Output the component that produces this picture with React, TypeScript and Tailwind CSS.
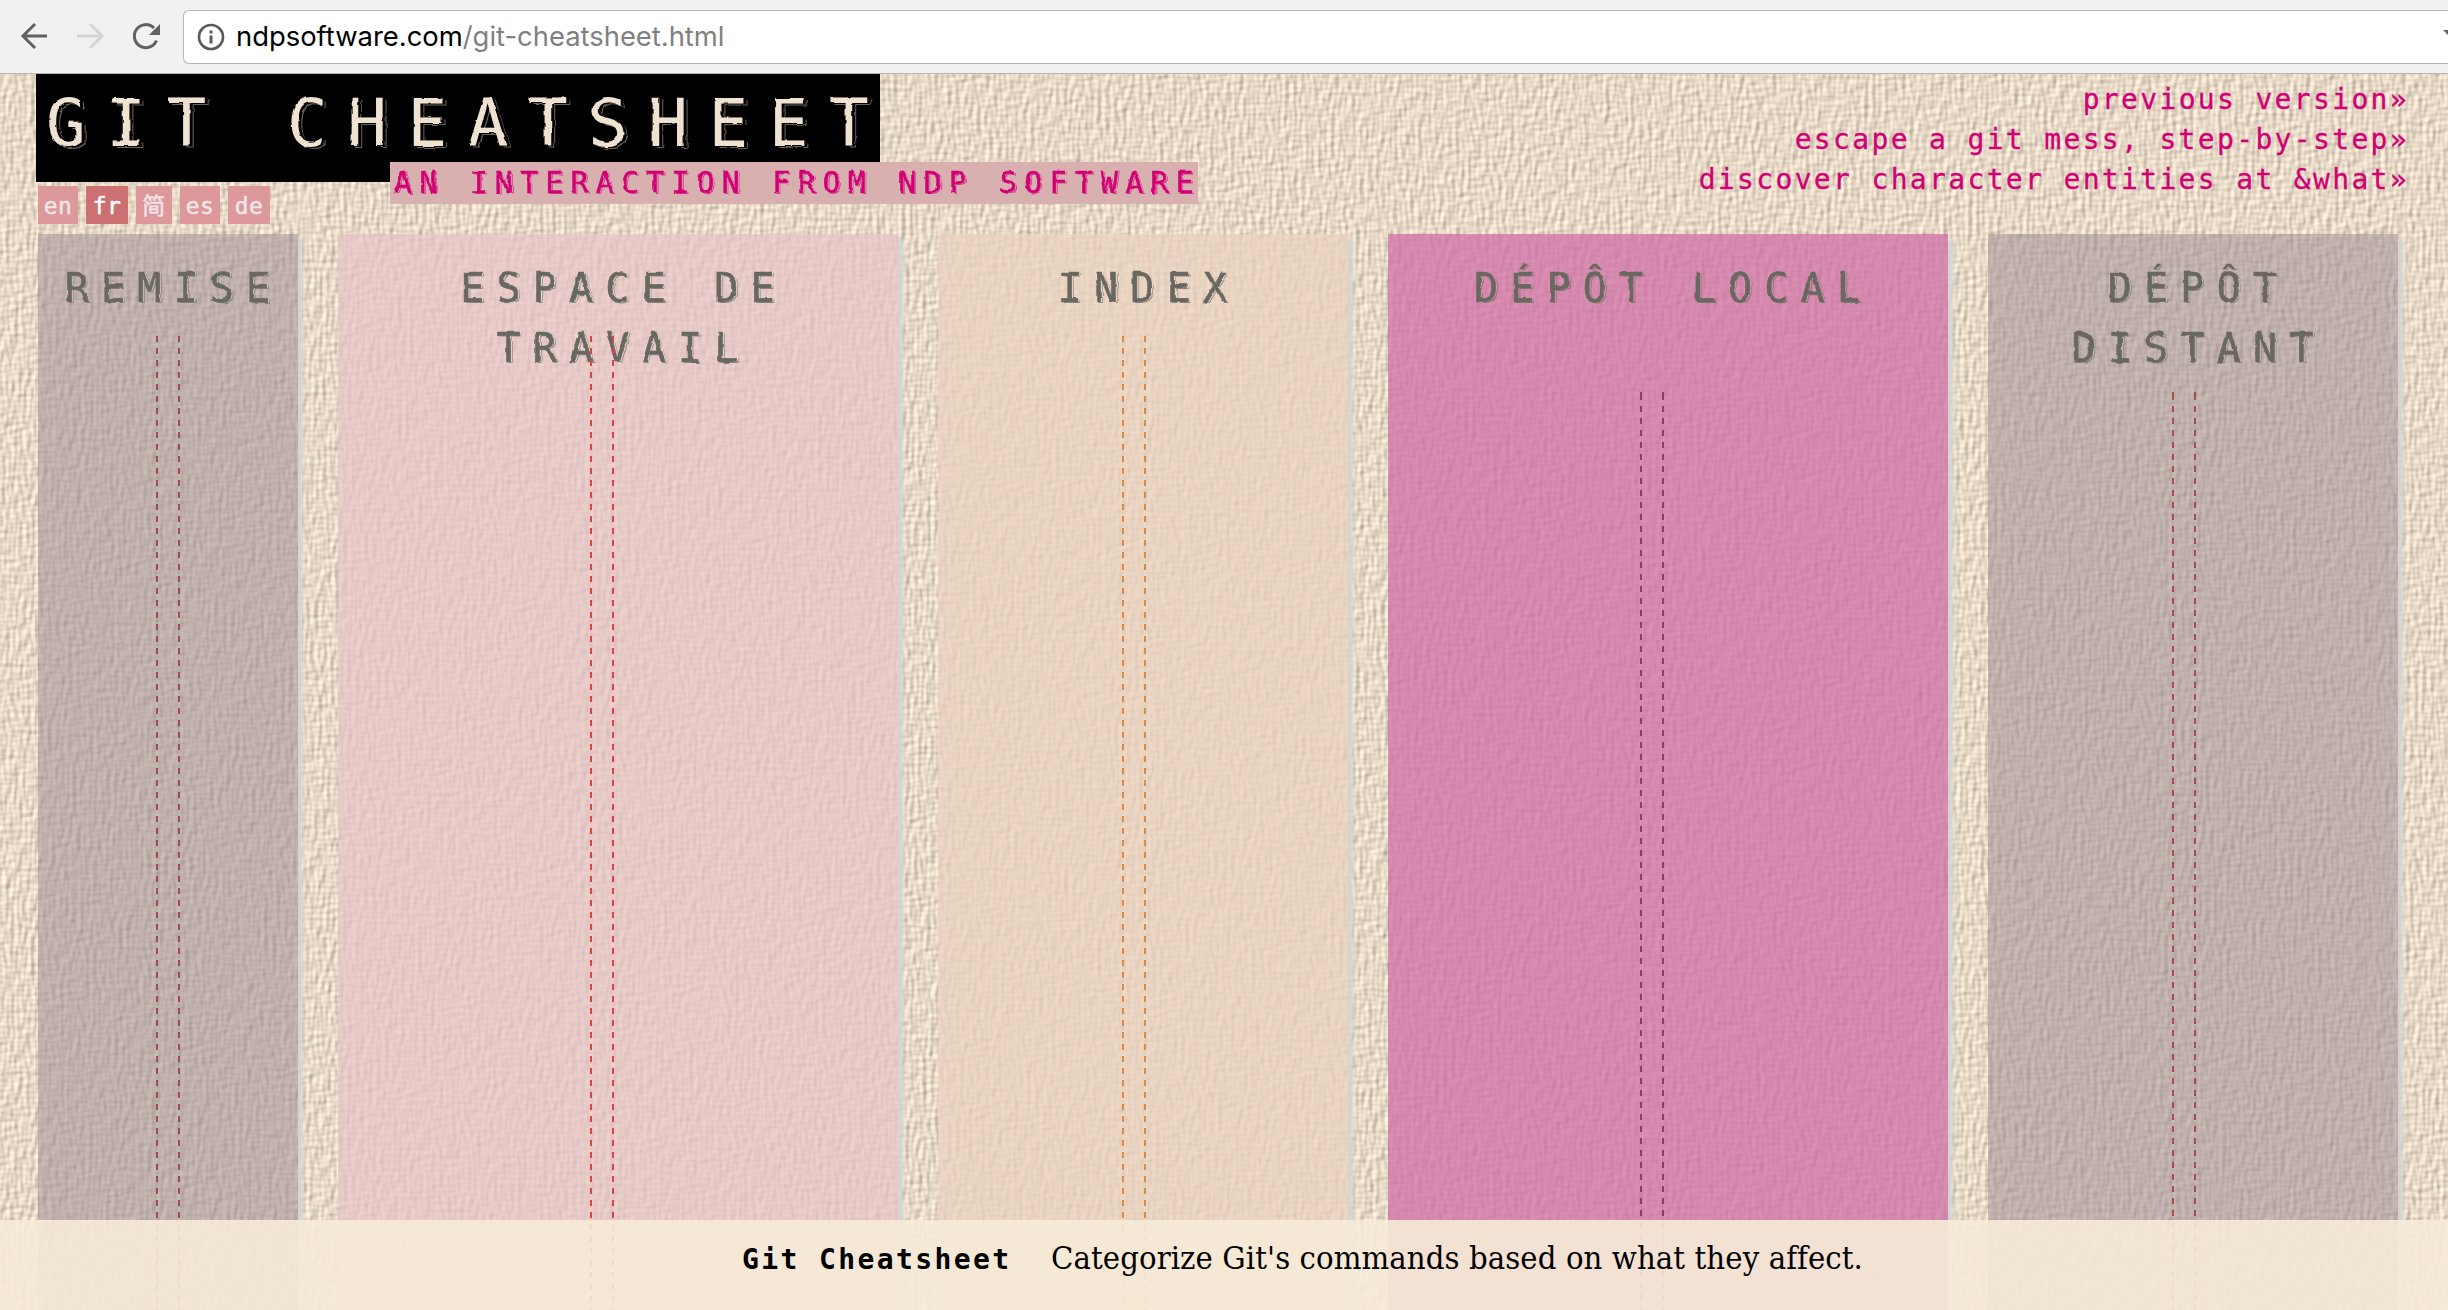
import React from "react";

type Column = { title: string; bg: string; width: string; line: string; echo: string; lineTop: string; dash: string; lead?: boolean };

const columns: Column[] = [
  { title: "REMISE", bg: "bg-[#a09096]/56", width: "w-[260px]", line: "left-[118px]", echo: "[text-shadow:1.5px_0_#c5b5b0,2.2px_0.5px_#8c847e]", lineTop: "top-[102px]", dash: "#98504d" },
  { title: "ESPACE DE TRAVAIL", bg: "bg-[#e6c4c6]/72", width: "w-[560px]", line: "left-[252px]", echo: "[text-shadow:1.5px_0_#e8ccc8,2.2px_0.5px_#948c86]", lineTop: "top-[102px]", dash: "#dc4440" },
  { title: "INDEX", bg: "bg-[#e9d2bf]/75", width: "w-[410px]", line: "left-[184px]", echo: "[text-shadow:1.5px_0_#ebd6c3,2.2px_0.5px_#948c86]", lineTop: "top-[102px]", dash: "#dc8a40" },
  { title: "DÉPÔT LOCAL", bg: "bg-[#d070a6]/76", width: "w-[560px]", line: "left-[252px]", echo: "[text-shadow:1.5px_0_#d78bb0,2.2px_0.5px_#8a7478]", lineTop: "top-[158px]", dash: "#903c66", lead: true },
  { title: "DÉPÔT DISTANT", bg: "bg-[#a09096]/56", width: "w-[410px]", line: "left-[184px]", echo: "[text-shadow:1.5px_0_#c5b5b0,2.2px_0.5px_#8c847e]", lineTop: "top-[158px]", dash: "#a0504d", lead: true },
];

const langs = [
  { t: "en", w: "w-[40px]" },
  { t: "fr", w: "w-[42px]", on: true },
  { t: "简", w: "w-[36px]" },
  { t: "es", w: "w-[40px]" },
  { t: "de", w: "w-[42px]" },
];

const mono = "font-['DejaVu_Sans_Mono',monospace]";

// Woven cloth: two directional noises lit from the upper left.
function Canvas() {
  return (
    <svg className="absolute inset-0 h-full w-full" aria-hidden="true">
      <defs>
        <filter id="weave" x="0" y="0" width="100%" height="100%" colorInterpolationFilters="sRGB">
          <feTurbulence type="fractalNoise" baseFrequency="0.24 0.075" numOctaves="1" seed="4" result="v" />
          <feTurbulence type="fractalNoise" baseFrequency="0.075 0.24" numOctaves="1" seed="9" result="h" />
          <feComposite in="v" in2="h" operator="arithmetic" k2="0.55" k3="0.45" result="n" />
          <feDiffuseLighting in="n" surfaceScale="1.4" diffuseConstant="1.15" lightingColor="#f3e4d1">
            <feDistantLight azimuth="215" elevation="56" />
          </feDiffuseLighting>
        </filter>
        <filter id="emboss" x="-2%" y="-10%" width="104%" height="120%">
          <feTurbulence type="fractalNoise" baseFrequency="0.09" numOctaves="2" seed="3" />
          <feDisplacementMap in="SourceGraphic" scale="3" xChannelSelector="R" yChannelSelector="G" />
        </filter>
      </defs>
      <rect width="100%" height="100%" filter="url(#weave)" />
    </svg>
  );
}

export default function App() {
  return (
    <div className="flex h-[1310px] w-[2448px] flex-col overflow-hidden bg-[#eee1ce]">
      <div className="flex h-[74px] shrink-0 items-center border-b border-[#b4b4b4] bg-[#f1f1f1]">
        <svg className="h-[72px] w-[183px] shrink-0" viewBox="0 0 183 72" fill="none" strokeWidth="3">
          <path d="M47 35H23M35 23L23 35L35 47" stroke="#616161" />
          <path d="M77 35H101M90 23L102 35L90 47" stroke="#d4d4d4" />
          <path d="M156.500 39.500A11.500 11.500 0 1 1 154 27" stroke="#616161" />
          <path d="M160 23V34H149Z" fill="#616161" />
        </svg>
        <div className="flex h-[54px] flex-1 items-center rounded-l-md border-[1.500px] border-r-0 border-[#b4b4b4] bg-white pl-[13px]">
          <svg className="mr-[11px] h-[28px] w-[28px]" viewBox="0 0 28 28" fill="none">
            <circle cx="14" cy="14" r="12" stroke="#5a5a5a" strokeWidth="2.600" />
            <path d="M14 12.500V20.500M14 7.500V10.500" stroke="#5a5a5a" strokeWidth="3" />
          </svg>
          <span className="pt-[1px] font-['Inter',sans-serif] text-[27.4px] whitespace-nowrap text-[#808080]"><span className="text-black">ndpsoftware.com</span>/git-cheatsheet.html</span>
          <span className="mt-[-6px] mr-[-9px] ml-auto border-x-[7px] border-t-[7px] border-x-transparent border-t-[#616161]" />
        </div>
      </div>

      <div className="relative flex flex-1 flex-col overflow-hidden">
        <Canvas />
        <header className="relative flex h-[160px] shrink-0 justify-between">
          <div className="ml-[36px]">
            <h1 className={`h-[108px] w-[844px] bg-black pl-[10px] text-[66px] leading-[100px] tracking-[20.5px] whitespace-nowrap text-[#f0e2d1] ${mono}`}>
              <span className="block [filter:url(#emboss)] [text-shadow:3px_1px_#000,4px_1.500px_#6a635b]">GIT CHEATSHEET</span>
            </h1>
            <div className="mt-[4px] ml-[2px] flex gap-2">
              {langs.map((l) => (
                <span key={l.t} className={`flex h-[38px] items-center justify-center pt-[2px] font-['DejaVu_Sans_Mono','Noto_Sans_CJK_SC',monospace] text-[23px] tracking-[0.500px] [-webkit-text-stroke:0.500px] ${l.w} ${l.on ? "bg-[#cd7072] text-white" : "bg-[#dc989a] text-[#f0e4e6]"}`}>{l.t}</span>
              ))}
            </div>
            <div className={`absolute top-[88px] left-[390px] h-[42px] w-[808px] bg-[#d8b0b0] pl-[4px] text-[30px] leading-[42px] tracking-[7.150px] whitespace-nowrap text-[#d10074] ${mono}`}>
              <span className="block [-webkit-text-stroke:0.500px] [filter:url(#emboss)] [text-shadow:1px_0_#d8b0b0,1.800px_0.500px_#d5408f]">AN INTERACTION FROM NDP SOFTWARE</span>
            </div>
          </div>
          <nav className={`mr-[39px] flex flex-col pt-[6px] text-right text-[28px] leading-[40px] tracking-[2.34px] text-[#d10074] [-webkit-text-stroke:0.300px] ${mono}`}>
            <a>previous version»</a>
            <a>escape a git mess, step-by-step»</a>
            <a>discover character entities at &amp;what»</a>
          </nav>
        </header>

        <main className="relative flex flex-1 gap-[40px] pl-[38px]">
          {columns.map((c, i) => (
            <section key={i} className={`relative shrink-0 shadow-[5px_5px_4px_#d4d5d1] ${c.width} ${c.bg}`}>
              <h2 className={`pt-[24px] pl-[11px] text-center text-[40px] leading-[60px] tracking-[12.2px] text-[#686860] [filter:url(#emboss)] [-webkit-text-stroke:0.600px] ${c.echo} ${mono}`}>{c.title}</h2>
              <div className={`absolute bottom-0 flex w-[24px] justify-between ${c.line} ${c.lineTop}`}>
                {[0, 1].map((n) => (
                  <span key={n} className="flex w-[2px] flex-col">
                    {c.lead && <span className="mb-[6px] h-[8px]" style={{ background: c.dash }} />}
                    <span className="flex-1" style={{ background: `repeating-linear-gradient(${c.dash} 0 6px, transparent 6px 12px)` }} />
                  </span>
                ))}
              </div>
            </section>
          ))}
        </main>

        <footer className="absolute inset-x-0 bottom-0 flex h-[90px] items-baseline bg-[#f6ebd8]/90 pt-[14px] pl-[742px] text-black">
          <strong className={`w-[309px] text-[28px] tracking-[2.400px] whitespace-nowrap ${mono}`}>Git Cheatsheet</strong>
          <span className="font-['DejaVu_Serif_Condensed','DejaVu_Serif',serif] text-[32.5px] tracking-[0.080px] whitespace-nowrap">Categorize Git's commands based on what they affect.</span>
        </footer>
      </div>
    </div>
  );
}
